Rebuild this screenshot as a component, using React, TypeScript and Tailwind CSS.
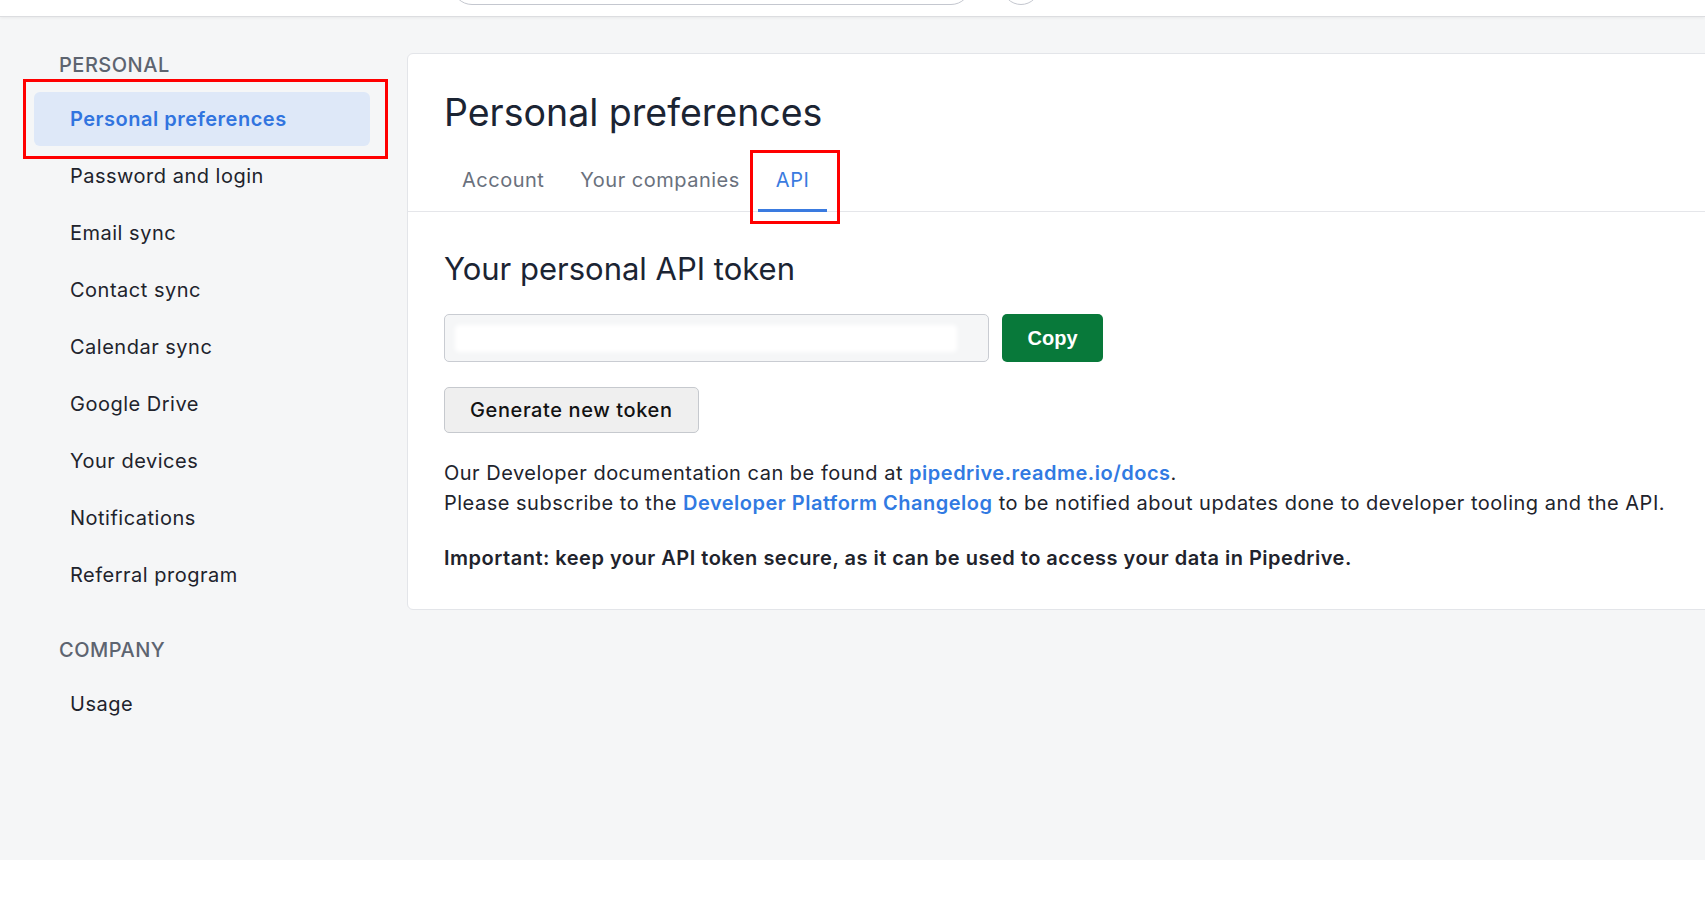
const personalLinks = [
  "Personal preferences",
  "Password and login",
  "Email sync",
  "Contact sync",
  "Calendar sync",
  "Google Drive",
  "Your devices",
  "Notifications",
  "Referral program",
];

const tabs = ["Account", "Your companies", "API"];

function Sidebar() {
  return (
    <aside className="w-[407px] shrink-0 pl-[34px] pr-[37px] pt-[36px] tracking-[0.5px]">
      <h3 className="px-[25px] text-[20px] leading-[24px] font-medium uppercase text-[#5d6470]">
        Personal
      </h3>
      <ul className="mt-[15px] flex flex-col gap-[3px]">
        {personalLinks.map((label, i) => (
          <li key={label} className="relative">
            <a
              href="#"
              className={
                i === 0
                  ? "flex h-[54px] items-center rounded-[6px] bg-[#dee8f8] px-[36px] text-[20px] font-semibold text-[#3174df]"
                  : "flex h-[54px] items-center rounded-[6px] px-[36px] text-[20px] text-[#21232c]"
              }
            >
              {label}
            </a>
            {i === 0 && (
              <span className="pointer-events-none absolute -left-[11px] -right-[18px] -top-[13px] -bottom-[13px] border-[3px] border-[#ff0000]" />
            )}
          </li>
        ))}
      </ul>

      <h3 className="mt-[36px] px-[25px] text-[20px] leading-[24px] font-medium uppercase text-[#5d6470]">
        Company
      </h3>
      <ul className="mt-[15px]">
        <li>
          <a href="#" className="flex h-[54px] items-center px-[36px] text-[20px] text-[#21232c]">
            Usage
          </a>
        </li>
      </ul>
    </aside>
  );
}

function ApiCard() {
  return (
    <section className="mt-[36px] -mr-[40px] h-[557px] flex-1 rounded-l-[6px] border border-[#e3e5e9] bg-white">
      <h1 className="mt-[36px] pl-[36px] text-[37.5px] leading-[46px] text-[#1b2433]">
        Personal preferences
      </h1>

      <div className="mt-[8px] flex border-b border-[#e5e6ea] pl-[36px]">
        {tabs.map((tab) => (
          <div key={tab} className="relative">
            <button
              className={
                tab === "API"
                  ? "-mb-px border-b-[3px] border-[#3a7be0] px-[18px] pt-[24px] pb-[17px] text-[20px] leading-[24px] tracking-[0.5px] text-[#3a7be0]"
                  : "-mb-px border-b-[3px] border-transparent px-[18px] pt-[24px] pb-[17px] text-[20px] leading-[24px] tracking-[0.5px] text-[#6a717d]"
              }
            >
              {tab}
            </button>
            {tab === "API" && (
              <span className="pointer-events-none absolute -left-[8px] -right-[13px] top-[6px] -bottom-[13px] border-[3px] border-[#ff0000]" />
            )}
          </div>
        ))}
      </div>

      <div className="pl-[36px] pr-[36px]">
        <h2 className="mt-[38px] text-[31px] leading-[38px] text-[#1b2433]">
          Your personal API token
        </h2>

        <div className="mt-[26px] flex items-center gap-[13px]">
          <div className="flex h-[48px] w-[545px] items-center rounded-[5px] border border-[#c9ccd2] bg-[#f5f6f7] px-[10px]">
            <div className="h-[27px] w-[502px] rounded-[4px] bg-white blur-[2px]" />
          </div>
          <button className="h-[48px] w-[101px] rounded-[5px] bg-[#08793a] text-[20px] font-bold text-white [font-family:'Liberation_Sans',Arial,sans-serif]">
            Copy
          </button>
        </div>

        <button className="mt-[25px] h-[46px] rounded-[5px] border border-[#c6c9ce] bg-[#efefef] px-[25px] text-[20px] font-medium tracking-[0.6px] text-[#121212]">
          Generate new token
        </button>

        <div className="mt-[25px] text-[20px] leading-[30px] tracking-[0.5px] text-[#21232c]">
          <p>
            Our Developer documentation can be found at{" "}
            <a href="#" className="font-semibold text-[#317ae2]">
              pipedrive.readme.io/docs
            </a>
            .
          </p>
          <p>
            Please subscribe to the{" "}
            <a href="#" className="font-semibold text-[#317ae2]">
              Developer Platform Changelog
            </a>{" "}
            to be notified about updates done to developer tooling and the API.
          </p>
          <p className="mt-[25px] font-semibold">
            Important: keep your API token secure, as it can be used to access your data in Pipedrive.
          </p>
        </div>
      </div>
    </section>
  );
}

export default function App() {
  return (
    <div className="h-[902px] w-[1705px] overflow-hidden bg-white [font-family:Inter,'Noto_Sans',sans-serif]">
      <header className="relative z-10 flex h-[17px] items-end overflow-hidden border-b border-[#dcdde0] bg-white pb-[11px] shadow-[0_1px_3px_rgba(0,0,0,0.06)]">
        <div className="ml-[452px] h-[40px] w-[519px] shrink-0 rounded-full border border-[#c4c7cf] bg-white" />
        <div className="ml-[31px] h-[38px] w-[38px] shrink-0 rounded-full border border-[#c4c7cf] bg-white" />
      </header>

      <main className="flex h-[843px] overflow-hidden bg-[#f5f6f7]">
        <Sidebar />
        <ApiCard />
      </main>
    </div>
  );
}
